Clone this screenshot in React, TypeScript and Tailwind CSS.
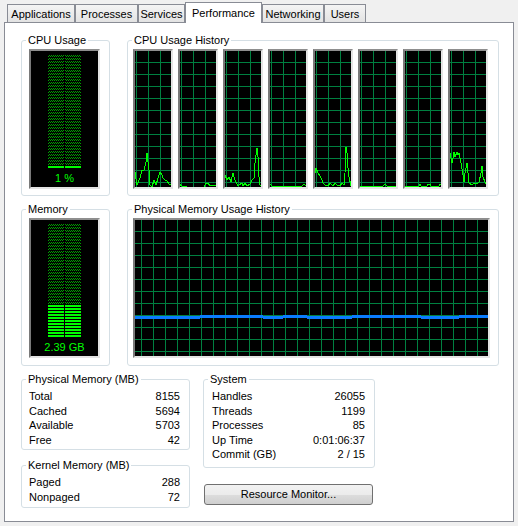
import React from "react";

const CPU_LINES: { pts: string; dx: number }[] = [
  { pts: "3,123 5,136 8,129 10,121 12,121 14,113 15,104 16,113 17,121 18,136 20,138 22,131 24,136 26,129 28,123 30,126 31,129 33,131 35,132 38,136 40,134", dx: -3 },
  { pts: "1,135 4,137 9,138 26,138 28,134 30,134 32,137 40,136", dx: -2 },
  { pts: "2,126 4,131 6,128 8,133 10,124 12,131 15,137 19,134 20,137 22,134 24,137 27,135 29,131 31,129 32,114 34,99 35,108 36,128 37,136 39,137", dx: -2 },
  { pts: "1,137 2,135 4,137 34,137 36,135 38,137 40,137", dx: -2 },
  { pts: "1,128 3,119 5,124 7,127 9,131 10,134 12,136 15,137 17,134 20,137 22,134 24,136 27,137 29,134 31,136 32,124 33,98 34,104 35,119 36,128 38,137 40,137", dx: -2 },
  { pts: "1,137 25,137 27,135 29,137 40,137", dx: -2 },
  { pts: "1,137 16,137 17,135 18,137 24,137 25,135 27,135 28,137 36,137 37,135 40,135", dx: -2 },
  { pts: "1,104 2,104 4,114 5,109 6,103 7,108 9,103 10,106 11,104 13,114 15,126 16,133 17,124 19,114 20,124 21,134 24,136 26,134 29,135 31,133 33,124 34,117 35,128 37,133 39,137", dx: -2 },
];

const GRID = "#008040";

function CpuGraph({ pts, dx }: { pts: string; dx: number }) {
  const hs = Array.from({ length: 11 }, (_, i) => 11 + 12 * i);
  return (
    <div className="w-[40px] h-[140px] border-2 border-t-[#8e8e8e] border-l-[#7a7a7a] border-r-[#e4e4e4] border-b-[#e4e4e4] bg-black">
      <svg width="36" height="136" viewBox="0 0 36 136" className="block" shapeRendering="crispEdges">
        {[1, 13, 25].map((x) => (
          <line key={x} x1={x + 0.5} y1={0} x2={x + 0.5} y2={136} stroke={GRID} strokeWidth={1} />
        ))}
        {hs.map((y) => (
          <line key={y} x1={0} y1={y + 0.5} x2={36} y2={y + 0.5} stroke={GRID} strokeWidth={1} />
        ))}
        <polyline
          points={pts}
          fill="none"
          stroke="#00ff00"
          strokeWidth={1}
          transform={`translate(${dx} -2)`}
        />
      </svg>
    </div>
  );
}

function MemGraph() {
  const vs = Array.from({ length: 29 }, (_, i) => 6 + 12 * i);
  const hs = Array.from({ length: 11 }, (_, i) => 11 + 12 * i);
  const segs: [number, number, boolean][] = [
    [0, 65, false],
    [65, 128, true],
    [128, 148, false],
    [148, 172, true],
    [172, 217, false],
    [217, 286, true],
    [286, 324, false],
    [324, 353, true],
  ];
  return (
    <div className="w-[357px] h-[140px] border-2 border-t-[#8e8e8e] border-l-[#7a7a7a] border-r-[#e4e4e4] border-b-[#e4e4e4] bg-black">
      <svg width="353" height="136" viewBox="0 0 353 136" className="block" shapeRendering="crispEdges">
        {vs.map((x) => (
          <line key={x} x1={x + 0.5} y1={0} x2={x + 0.5} y2={136} stroke={GRID} strokeWidth={1} />
        ))}
        {hs.map((y) => (
          <line key={y} x1={0} y1={y + 0.5} x2={353} y2={y + 0.5} stroke={GRID} strokeWidth={1} />
        ))}
        {segs.map(([a, b, hi]) => (
          <rect key={a} x={a} y={hi ? 95 : 96} width={b - a} height={3} fill="#0a7cff" />
        ))}
      </svg>
    </div>
  );
}

function Meter({ lit, label, id }: { lit: number; label: string; id: string }) {
  const rows = 38;
  const unlit = rows - lit;
  return (
    <div className="w-[71px] h-[140px] border-2 border-t-[#8e8e8e] border-l-[#7a7a7a] border-r-[#e4e4e4] border-b-[#e4e4e4] bg-black flex flex-col">
      <svg width="67" height="119" className="block" shapeRendering="crispEdges">
        <defs>
          <pattern id={id} x="0" y="1" width="2" height="3" patternUnits="userSpaceOnUse">
            <rect x="0" y="0" width="1" height="1" fill="#00a000" />
            <rect x="1" y="1" width="1" height="1" fill="#00a000" />
          </pattern>
        </defs>
        {[17, 34].map((cx) => (
          <g key={cx}>
            <rect x={cx} y={4} width={16} height={unlit * 3} fill={`url(#${id})`} />
            {Array.from({ length: lit }, (_, i) => (
              <rect key={i} x={cx} y={4 + (unlit + i) * 3} width={16} height={2} fill="#00ff00" />
            ))}
          </g>
        ))}
      </svg>
      <div className="h-[17px] leading-[17px] text-center text-[#00ff00] text-[11px]">{label}</div>
    </div>
  );
}

function Group({
  title,
  className,
  children,
}: {
  title: string;
  className: string;
  children?: React.ReactNode;
}) {
  return (
    <div className={`border border-[#d5dfe5] rounded-[3px] bg-white ${className}`}>
      <div className="-mt-[8px] ml-[4px] px-[2px] w-fit bg-white h-[14px] leading-[14px] whitespace-nowrap">
        {title}
      </div>
      {children}
    </div>
  );
}

function StatRow({ label, value }: { label: string; value: string }) {
  return (
    <div className="flex justify-between h-[14.5px] leading-[14.5px] whitespace-nowrap">
      <span>{label}</span>
      <span>{value}</span>
    </div>
  );
}

const TABS: { name: string; w: string; sel?: boolean }[] = [
  { name: "Applications", w: "w-[68px]" },
  { name: "Processes", w: "w-[63px]" },
  { name: "Services", w: "w-[47px]" },
  { name: "Performance", w: "w-[77px]", sel: true },
  { name: "Networking", w: "w-[62px]" },
  { name: "Users", w: "w-[42px]" },
];

export default function App() {
  return (
    <div className="w-[518px] h-[526px] bg-[#f0f0f0] font-['Liberation_Sans',Arial,sans-serif] text-[11px] text-black overflow-hidden">
      <div className="flex items-end h-[22px] pl-[7px]">
        {TABS.map((t) =>
          t.sel ? (
            <div
              key={t.name}
              className={`${t.w} h-[21px] -mb-px relative z-10 bg-white border-t border-l border-r border-[#898c95] flex justify-center pt-[3px] leading-[14px] whitespace-nowrap`}
            >
              {t.name}
            </div>
          ) : (
            <div
              key={t.name}
              className={`${t.w} h-[18px] bg-gradient-to-b from-[#f4f4f4] to-[#e3e3e3] border-t border-l border-r border-[#898c95] flex justify-center pt-[2px] leading-[14px] whitespace-nowrap`}
            >
              {t.name}
            </div>
          )
        )}
      </div>
      <div className="ml-[4px] w-[510px] h-[500px] border border-[#898c95] bg-white pt-[17px] pl-[16px]">
        <div className="flex gap-[17px]">
          <Group title="CPU Usage" className="w-[89px] h-[156px]">
            <div className="mt-[2px] pl-[7px]">
              <Meter lit={1} label="1 %" id="cpuDots" />
            </div>
          </Group>
          <Group title="CPU Usage History" className="w-[372px] h-[156px]">
            <div className="mt-[2px] pl-[5px] flex gap-[5px]">
              {CPU_LINES.map((l, i) => (
                <CpuGraph key={i} pts={l.pts} dx={l.dx} />
              ))}
            </div>
          </Group>
        </div>
        <div className="flex gap-[17px] mt-[13px]">
          <Group title="Memory" className="w-[89px] h-[157px]">
            <div className="mt-[2px] pl-[7px]">
              <Meter lit={11} label="2.39 GB" id="memDots" />
            </div>
          </Group>
          <Group title="Physical Memory Usage History" className="w-[372px] h-[157px]">
            <div className="mt-[2px] pl-[5px]">
              <MemGraph />
            </div>
          </Group>
        </div>
        <div className="flex gap-[13px] mt-[13px]">
          <div className="w-[169px] flex flex-col">
            <Group title="Physical Memory (MB)" className="w-[169px] h-[71px]">
              <div className="mt-[3px] pl-[7px] pr-[9px]">
                <StatRow label="Total" value="8155" />
                <StatRow label="Cached" value="5694" />
                <StatRow label="Available" value="5703" />
                <StatRow label="Free" value="42" />
              </div>
            </Group>
            <Group title="Kernel Memory (MB)" className="w-[169px] h-[43px] mt-[15px]">
              <div className="mt-[3px] pl-[7px] pr-[9px]">
                <StatRow label="Paged" value="288" />
                <StatRow label="Nonpaged" value="72" />
              </div>
            </Group>
          </div>
          <div className="w-[172px] flex flex-col">
            <Group title="System" className="w-[172px] h-[89px]">
              <div className="mt-[3px] pl-[8px] pr-[9px]">
                <StatRow label="Handles" value="26055" />
                <StatRow label="Threads" value="1199" />
                <StatRow label="Processes" value="85" />
                <StatRow label="Up Time" value="0:01:06:37" />
                <StatRow label="Commit (GB)" value="2 / 15" />
              </div>
            </Group>
            <button className="mt-[16px] ml-[1px] w-[169px] h-[21px] border border-[#707070] rounded-[3px] bg-[linear-gradient(to_bottom,#f2f2f2_0%,#ebebeb_50%,#dddddd_50%,#cfcfcf_100%)] text-[11px] leading-[19px] text-black text-center">
              Resource Monitor...
            </button>
          </div>
        </div>
      </div>
    </div>
  );
}
